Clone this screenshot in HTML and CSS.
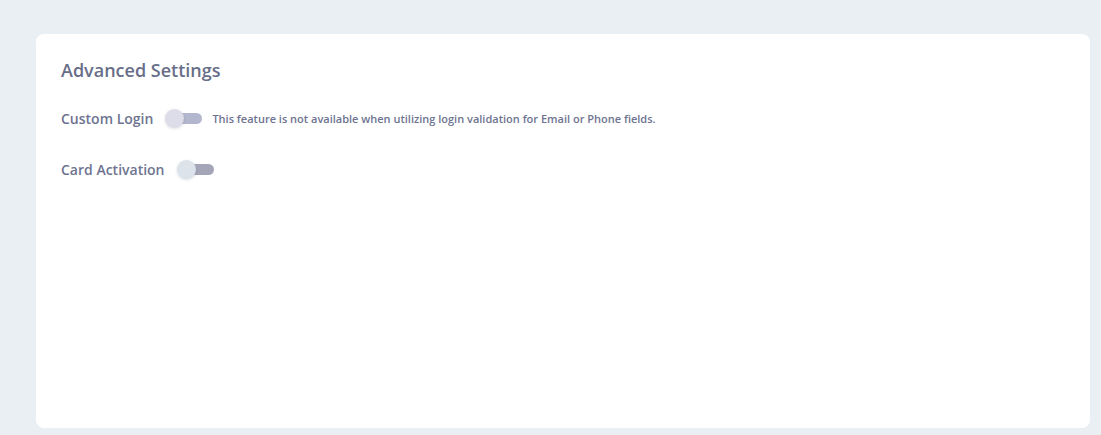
FILE: index.html
```html
<!DOCTYPE html>
<html>
<head>
<meta charset="utf-8">
<link rel="stylesheet" href="styles.css">
</head>
<body>
<div class="page">
  <section class="card">
    <h2 class="title">Advanced Settings</h2>
    <div class="row">
      <span class="label">Custom Login</span>
      <span class="toggle toggle-a"><span class="knob"></span></span>
      <span class="hint">This feature is not available when utilizing login validation for Email or Phone fields.</span>
    </div>
    <div class="row">
      <span class="label">Card Activation</span>
      <span class="toggle toggle-b"><span class="knob"></span></span>
    </div>
  </section>
</div>
</body>
</html>
```

FILE: styles.css
```css
html, body {
  margin: 0;
  padding: 0;
  background: #e9eff3;
  font-family: "Open Sans", "Noto Sans", sans-serif;
}
.page {
  padding: 34px 11px 7px 36px;
  height: 435px;
  box-sizing: border-box;
}
.card {
  background: #ffffff;
  border-radius: 8px;
  height: 394px;
  box-sizing: border-box;
  padding: 24px 25px;
}
.title {
  margin: 0 0 24px 0;
  font-size: 18px;
  font-weight: 600;
  color: #686e88;
  line-height: 24px;
}
.row {
  display: flex;
  align-items: center;
  height: 24px;
  margin-bottom: 27px;
}
.label {
  font-size: 14px;
  font-weight: 600;
  color: #6e7490;
  margin-right: 12px;
}
.toggle {
  position: relative;
  width: 36px;
  height: 11px;
  border-radius: 6px;
  margin-left: 1px;
}
.toggle-a { background: #b3b7cd; }
.toggle-b { background: #a4a6b8; }
.knob {
  position: absolute;
  left: -1px;
  top: -4px;
  width: 19px;
  height: 19px;
  border-radius: 50%;
  box-shadow: 0 1px 3px rgba(60, 70, 100, 0.18);
}
.toggle-a .knob { background: #dcdde9; }
.toggle-b .knob { background: #dce3eb; }
.hint {
  margin-left: 10px;
  font-size: 11px;
  font-weight: 600;
  color: #6e7490;
}
```
